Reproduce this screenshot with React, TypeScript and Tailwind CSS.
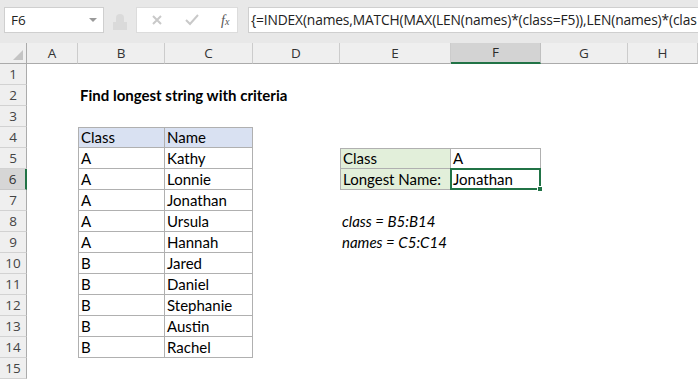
import React from "react";

const cols = ["A", "B", "C", "D", "E", "F", "G", "H"];

type Cell = { text?: string; cls?: string };

const classes = ["A", "A", "A", "A", "A", "B", "B", "B", "B", "B"];
const names = ["Kathy", "Lonnie", "Jonathan", "Ursula", "Hannah", "Jared", "Daniel", "Stephanie", "Austin", "Rachel"];

const tb = "border-[#b0b0b0]";

function cellsFor(row: number): Record<string, Cell> {
  const out: Record<string, Cell> = {};
  if (row === 2) out.B = { text: "Find longest string with criteria", cls: "font-bold text-[15.4px] whitespace-nowrap overflow-visible z-10" };
  if (row === 4) {
    out.B = { text: "Class", cls: `bg-[#d9e1f2] border-l border-t border-r border-b ${tb}` };
    out.C = { text: "Name", cls: `bg-[#d9e1f2] border-t border-r border-b ${tb}` };
  }
  if (row >= 5 && row <= 14) {
    out.B = { text: classes[row - 5], cls: `border-l border-r border-b ${tb}` };
    out.C = { text: names[row - 5], cls: `border-r border-b ${tb}` };
  }
  if (row === 5) {
    out.E = { text: "Class", cls: `bg-[#e2efda] border-l border-t border-r border-b ${tb}` };
    out.F = { text: "A", cls: `border-t border-r border-b ${tb}` };
  }
  if (row === 6) {
    out.E = { text: "Longest Name:", cls: `bg-[#e2efda] border-l border-r border-b ${tb}` };
    out.F = { text: "Jonathan", cls: "selected" };
  }
  if (row === 8) out.E = { text: "class = B5:B14", cls: "italic whitespace-nowrap overflow-visible z-10" };
  if (row === 9) out.E = { text: "names = C5:C14", cls: "italic whitespace-nowrap overflow-visible z-10" };
  return out;
}

function Toolbar() {
  return (
    <div className="h-[43px] bg-[#e8e8e8] relative" style={{ fontFamily: '"Open Sans", "Noto Sans", sans-serif' }}>
      <div className="flex items-start pt-[7px] pl-[4px]">
        {/* name box */}
        <div className="w-[100px] h-[26px] bg-white border border-[#cfcfcf] flex items-center justify-between pl-[6px] pr-[6px]">
          <span className="text-[13.5px] text-[#222]">F6</span>
          <svg width="8" height="6" viewBox="0 0 8 6"><path d="M0 1h8L4 5z" fill="#9a9a9a" /></svg>
        </div>
        {/* grip */}
        <div className="w-[32px] h-[26px] flex items-center justify-center">
          <div className="w-[14px] h-[20px] flex flex-col items-center justify-end">
            <div className="w-[8px] h-[8px] rounded-t-full bg-[#dadada]" />
            <div className="w-[14px] h-[8px] bg-[#dadada]" />
          </div>
        </div>
        {/* fx box */}
        <div className="w-[102px] h-[26px] bg-white border border-[#dcdcdc] flex items-center">
          <svg className="ml-[14px]" width="12" height="12" viewBox="0 0 12 12">
            <path d="M2 2l8 8M10 2l-8 8" stroke="#c9c9c9" strokeWidth="2" />
          </svg>
          <svg className="ml-[22px]" width="14" height="12" viewBox="0 0 14 12">
            <path d="M1 6l4 4 8-9" stroke="#c9c9c9" strokeWidth="2" fill="none" />
          </svg>
          <span className="ml-[22px] text-[14px] italic text-[#555]" style={{ fontFamily: '"Liberation Serif", serif' }}>
            f<span className="text-[10px]">x</span>
          </span>
        </div>
        <div className="w-[10px]" />
        {/* formula bar */}
        <div className="flex-1 h-[26px] bg-white border border-[#cfcfcf] border-r-0 flex items-center pl-[2px] overflow-hidden">
          <span className="text-[13.8px] text-[#222] whitespace-nowrap tracking-[-0.15px]">
            {"{=INDEX(names,MATCH(MAX(LEN(names)*(class=F5)),LEN(names)*(clas"}
          </span>
        </div>
      </div>
    </div>
  );
}

export default function App() {
  const rows = Array.from({ length: 15 }, (_, i) => i + 1);
  return (
    <div className="w-[698px] h-[381px] overflow-hidden bg-white">
      <Toolbar />
      <div
        className="grid grid-cols-[27px_51px_87px_88px_87px_111px_90px_87px_1fr] auto-rows-[21px]"
        style={{ fontFamily: "Lato, Carlito, sans-serif" }}
      >
        {/* column header row */}
        <div className="bg-[#efefef] border-b border-r border-[#ababab] relative">
          <svg className="absolute right-[3px] bottom-[3px]" width="10" height="10" viewBox="0 0 10 10">
            <path d="M10 0v10H0z" fill="#c4c4c4" />
          </svg>
        </div>
        {cols.map((c) => (
          <div
            key={c}
            className={
              c === "F"
                ? "bg-[#d3d3d3] border-b-2 border-b-[#217346] border-r border-r-[#c0c0c0] flex items-center justify-center text-[13.5px] text-[#2a2a2a]"
                : "bg-[#efefef] border-b border-b-[#ababab] border-r border-r-[#cccccc] flex items-center justify-center text-[13.5px] text-[#333]"
            }
            style={{ fontFamily: '"Open Sans", "Noto Sans", sans-serif' }}
          >
            {c}
          </div>
        ))}
        {rows.map((r) => {
          const cells = cellsFor(r);
          return (
            <React.Fragment key={r}>
              <div
                className={
                  r === 6
                    ? "bg-[#d6d6d6] border-b border-b-[#c8c8c8] border-r-2 border-r-[#217346] flex items-center justify-center text-[13.5px] text-[#333]"
                    : "bg-[#efefef] border-b border-b-[#d2d2d2] border-r border-r-[#ababab] flex items-center justify-center text-[13.5px] text-[#444]"
                }
                style={{ fontFamily: '"Open Sans", "Noto Sans", sans-serif' }}
              >
                {r}
              </div>
              {cols.map((c) => {
                const cell = cells[c];
                if (!cell) return <div key={c} />;
                if (cell.cls === "selected") {
                  return (
                    <div key={c} className="relative border-2 border-[#217346] -mt-[1px] -ml-[1px] flex items-center pl-[1px] text-[15px] text-black z-10">
                      {cell.text}
                      <div className="absolute -right-[4px] -bottom-[4px] w-[6px] h-[6px] bg-[#217346] border border-white" />
                    </div>
                  );
                }
                return (
                  <div key={c} className={`relative flex items-center pl-[2px] text-[15px] text-black ${cell.cls ?? ""}`}>
                    {cell.text}
                  </div>
                );
              })}
            </React.Fragment>
          );
        })}
      </div>
    </div>
  );
}
